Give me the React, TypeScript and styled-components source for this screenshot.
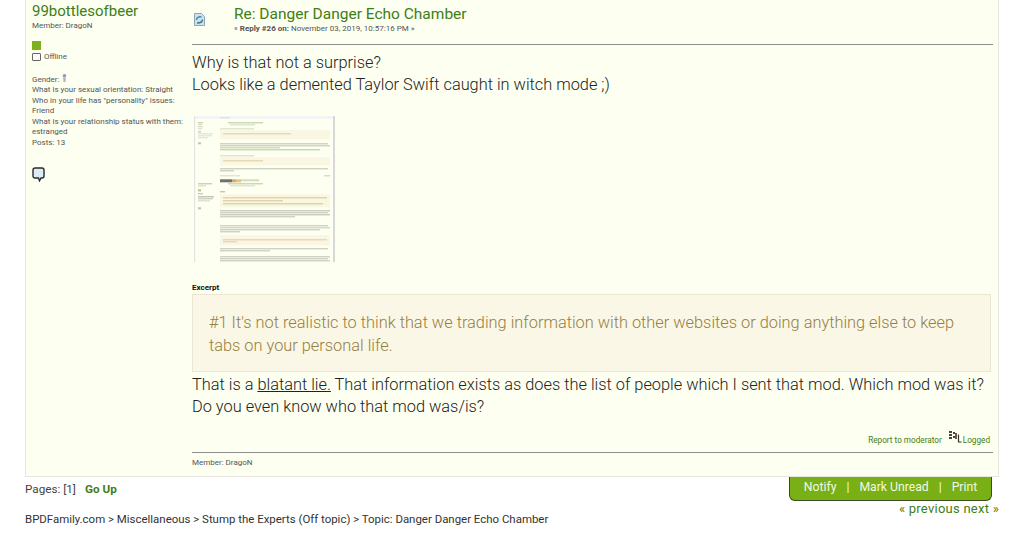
import styled, { createGlobalStyle } from "styled-components";

const GlobalStyle = createGlobalStyle`
  html, body {
    margin: 0;
    padding: 0;
    background: #fff;
    font-family: Roboto, "Liberation Sans", sans-serif;
    overflow: hidden;
  }
`;

const green = "#3f7d17";

// the thumbnail is a shrunken screenshot of the forum: [x, y, w, h, colour]
const thumbParts: [number, number, number, number, string][] = [
  [26, 1, 10, 1, "#cfd2c4"],
  [4, 6, 5, 1, "#8fae6e"],
  [4, 8, 4, 1, "#c3c6b4"],
  [4, 10, 5, 1, "#c3c6b4"],
  [4, 12, 4, 1, "#c3c6b4"],
  [4, 15, 3, 1, "#8fae6e"],
  [4, 17, 15, 1, "#cdd0bf"],
  [4, 19, 14, 1, "#cdd0bf"],
  [4, 21, 10, 1, "#cdd0bf"],
  [4, 26, 3, 2, "#a9ac9c"],
  [34, 6, 35, 1, "#93b774"],
  [36, 8, 25, 1, "#c6cab5"],
  [26, 12, 34, 1, "#c3d2ac"],
  [26, 14, 110, 9, "#f8f3dc"],
  [29, 17, 68, 1, "#d0bb8a"],
  [26, 27, 108, 1, "#a5a99a"],
  [26, 29, 110, 1, "#a5a99a"],
  [26, 31, 60, 1, "#9fc084"],
  [26, 33, 100, 1, "#8fb86f"],
  [26, 39, 34, 1, "#c3d2ac"],
  [26, 41, 110, 8, "#f8f3dc"],
  [29, 44, 40, 1, "#d0bb8a"],
  [26, 52, 108, 1, "#a5a99a"],
  [26, 54, 14, 1, "#a5a99a"],
  [26, 59, 20, 1, "#c6cab5"],
  [130, 59, 6, 1, "#a9c48e"],
  [26, 63, 12, 3, "#3a3a3a"],
  [38, 63, 4, 3, "#c9825b"],
  [42, 63, 5, 3, "#d9b54a"],
  [47, 63, 18, 2, "#c3d2ac"],
  [4, 67, 14, 1, "#8fae6e"],
  [4, 69, 8, 1, "#c3c6b4"],
  [34, 67, 35, 1, "#93b774"],
  [36, 69, 25, 1, "#c6cab5"],
  [4, 73, 3, 2, "#8fae6e"],
  [4, 77, 5, 1, "#8fae6e"],
  [4, 80, 16, 1, "#8d9080"],
  [4, 82, 15, 1, "#a5a99a"],
  [4, 84, 12, 1, "#c3c6b4"],
  [4, 91, 3, 2, "#a9ac9c"],
  [26, 75, 5, 1, "#8d9080"],
  [26, 78, 110, 13, "#f8f3dc"],
  [29, 81, 104, 1, "#c9b06f"],
  [29, 84, 60, 1, "#c9b06f"],
  [29, 87, 100, 1, "#a4bd6c"],
  [26, 94, 110, 1, "#9a9e8e"],
  [26, 96, 108, 1, "#a5a99a"],
  [26, 98, 110, 1, "#9a9e8e"],
  [26, 100, 75, 1, "#a5a99a"],
  [26, 109, 108, 1, "#a5a99a"],
  [26, 111, 110, 1, "#a9b7b5"],
  [26, 113, 100, 1, "#a5a99a"],
  [26, 115, 20, 1, "#a5a99a"],
  [26, 119, 110, 10, "#f8f3dc"],
  [29, 123, 104, 1, "#d0bb8a"],
  [29, 125, 14, 1, "#d0bb8a"],
  [26, 132, 108, 1, "#a5a99a"],
  [26, 134, 50, 1, "#a5a99a"],
  [26, 140, 110, 1, "#a5a99a"],
  [26, 142, 108, 1, "#a5a99a"],
  [26, 144, 110, 1, "#a5a99a"],
];

export default function App() {
  return (
    <Page>
      <GlobalStyle />
      <PostPanel>
        <Poster>
          <PosterName>99bottlesofbeer</PosterName>
          <PosterGroup>Member: DragoN</PosterGroup>
          <GroupStar />
          <OnlineRow>
            <OfflineBox />
            Offline
          </OnlineRow>
          <PosterInfo>
            <div>
              Gender: <GenderIcon viewBox="0 0 5 8">
                <circle cx="2.500" cy="1.800" r="1.800" fill="#9a9aa6" />
                <path d="M1 3.500h3L3.500 8h-2z" fill="#b5b5c2" />
              </GenderIcon>
            </div>
            <div>What is your sexual orientation: Straight</div>
            <div>Who in your life has "personality" issues: Friend</div>
            <div>What is your relationship status with them: estranged</div>
            <div>Posts: 13</div>
          </PosterInfo>
          <BubbleIcon viewBox="0 0 13 15">
            <path
              d="M3 1h7a2 2 0 0 1 2 2v6a2 2 0 0 1-2 2H9l-1.500 2.800L6.500 11H3a2 2 0 0 1-2-2V3a2 2 0 0 1 2-2z"
              fill="#dcecf6"
              stroke="#2a2a2a"
              strokeWidth="1.400"
            />
          </BubbleIcon>
        </Poster>
        <PostBody>
          <PostHeader>
            <XIcon viewBox="0 0 11 13">
              <path d="M0.500 0.500h7l3 3v9h-10z" fill="#cfe0ea" stroke="#8ea6b8" />
              <path d="M2.500 7c0-2.500 2-3.500 5-3" fill="none" stroke="#3f8fb0" strokeWidth="1.500" />
              <path d="M8.500 6.500c0 2.500-2 3.500-5.500 3.500" fill="none" stroke="#2f7f8c" strokeWidth="1.500" />
            </XIcon>
            <div>
              <PostTitle>Re: Danger Danger Echo Chamber</PostTitle>
              <ReplyInfo>
                « <b>Reply #26 on:</b> November 03, 2019, 10:57:16 PM »
              </ReplyInfo>
            </div>
          </PostHeader>
          <BodyText>
            Why is that not a surprise?
            <br />
            Looks like a demented Taylor Swift caught in witch mode ;)
          </BodyText>
          <Thumbnail viewBox="0 0 141 146">
            <rect width="141" height="146" fill="#ffffff" />
            <rect x="0" width="1.500" height="146" fill="#e4e4e4" />
            <rect x="139" width="2" height="146" fill="#d8d8d8" />
            <rect x="1.500" y="0" width="137.500" height="3" fill="#f4f4f4" />
            <rect x="1.500" y="3" width="137.500" height="143" fill="#fdfff0" />
            <g opacity="0.72">
              {thumbParts.map(([x, y, w, h, fill], i) => (
                <rect key={i} x={x} y={y + 0.3} width={w} height={h} fill={fill} />
              ))}
            </g>
          </Thumbnail>
          <QuoteHeader>Excerpt</QuoteHeader>
          <Quote>
            #1 It's not realistic to think that we trading information with other websites or doing anything else to keep
            tabs on your personal life.
          </Quote>
          <BodyText>
            That is a <u>blatant lie.</u> That information exists as does the list of people which I sent that mod. Which
            mod was it? Do you even know who that mod was/is?
          </BodyText>
          <ModeratorBar>
            <span>Report to moderator</span>
            <IpIcon viewBox="0 0 14 12">
              <path d="M1 0h3v2H1zM5 1h2v2H5zM1 3h3v2H1zM1 6h3v2H1zM5 5h2v2H5z" fill="#444" />
              <path d="M7 2h2v6H7z" fill="#8a4a4a" />
              <path d="M10.500 3.500v7.500h3" fill="none" stroke="#2b3a2b" strokeWidth="1.200" />
            </IpIcon>
            <span>Logged</span>
          </ModeratorBar>
          <Signature>Member: DragoN</Signature>
        </PostBody>
      </PostPanel>
      <BelowPanel>
        <PagesLine>
          Pages: [1]<GoUp>Go Up</GoUp>
        </PagesLine>
        <BelowRight>
          <ButtonStrip>
            <span>Notify</span>
            <Separator>|</Separator>
            <span>Mark Unread</span>
            <Separator>|</Separator>
            <span>Print</span>
          </ButtonStrip>
          <PrevNext>« previous next »</PrevNext>
        </BelowRight>
      </BelowPanel>
      <Breadcrumb>
        BPDFamily.com &gt; Miscellaneous &gt; Stump the Experts (Off topic) &gt; Topic: Danger Danger Echo Chamber
      </Breadcrumb>
    </Page>
  );
}

const Page = styled.div`
  width: 1024px;
  height: 556px;
  overflow: hidden;
  box-sizing: border-box;
  padding: 0 25px;
  color: #333;
`;

const PostPanel = styled.div`
  display: flex;
  height: 477px;
  box-sizing: border-box;
  background: #fdfff0;
  border: 1px solid #e6e6de;
  border-top: none;
`;

const Poster = styled.div`
  width: 156px;
  flex: none;
  margin-left: 6px;
  font-size: 8px;
  line-height: 10.500px;
  font-weight: 400;
  color: #555;
`;

const PosterName = styled.div`
  font-size: 15px;
  line-height: 18px;
  margin-top: 2px;
  color: ${green};
`;

const PosterGroup = styled.div`
  margin-top: 1px;
`;

const GroupStar = styled.div`
  width: 9px;
  height: 9px;
  margin-top: 9px;
  background: #7db01c;
`;

const OnlineRow = styled.div`
  display: flex;
  align-items: center;
  gap: 3px;
  height: 11px;
  margin-top: 2px;
`;

const OfflineBox = styled.span`
  width: 7px;
  height: 6px;
  border: 1px solid #666;
  border-radius: 1px;
  background: #fafafa;
`;

const PosterInfo = styled.div`
  margin-top: 11px;
`;

const GenderIcon = styled.svg`
  width: 5px;
  height: 8px;
`;

const BubbleIcon = styled.svg`
  display: block;
  width: 13px;
  height: 15px;
  margin-top: 19px;
`;

const PostBody = styled.div`
  width: 801px;
  flex: none;
  margin-left: 4px;
  display: flex;
  flex-direction: column;
`;

const PostHeader = styled.div`
  display: flex;
  height: 45px;
  box-sizing: border-box;
  margin-bottom: 7px;
  padding: 5px 0 0 2px;
  gap: 29px;
  border-bottom: 1px solid #8f8f8f;
`;

const XIcon = styled.svg`
  width: 11px;
  height: 13px;
  margin-top: 8px;
`;

const PostTitle = styled.div`
  font-size: 15.500px;
  line-height: 18px;
  color: ${green};
`;

const ReplyInfo = styled.div`
  font-size: 8px;
  line-height: 12px;
  color: #555;
`;

const BodyText = styled.div`
  font-size: 16.350px;
  font-weight: 300;
  line-height: 22.400px;
  color: #222;
`;

const Thumbnail = styled.svg`
  display: block;
  width: 141px;
  height: 146px;
  margin: 19px 0 0 2px;
`;

const QuoteHeader = styled.div`
  font-size: 8px;
  font-weight: 700;
  line-height: 10px;
  color: #111;
  margin-top: 21px;
`;

const Quote = styled.div`
  width: 799px;
  box-sizing: border-box;
  height: 78px;
  margin: 1px 0 2px;
  padding: 17px 16px 0;
  background: #fbf7e6;
  border: 1px solid #ebe6cf;
  color: #957f42;
  font-size: 16.350px;
  font-weight: 300;
  line-height: 22.800px;
`;

const ModeratorBar = styled.div`
  display: flex;
  justify-content: flex-end;
  align-items: flex-end;
  height: 11px;
  margin: 16px 3px 0 0;
  font-size: 8.200px;
  line-height: 11px;
  color: ${green};
`;

const IpIcon = styled.svg`
  width: 14px;
  height: 12px;
  margin: 0 1px 3px 6px;
`;

const Signature = styled.div`
  margin-top: 6px;
  padding-top: 4px;
  border-top: 1px solid #8f8f8f;
  font-size: 8px;
  line-height: 11px;
  color: #555;
`;

const BelowPanel = styled.div`
  display: flex;
  justify-content: space-between;
  align-items: flex-start;
  height: 35px;
`;

const PagesLine = styled.div`
  font-size: 11.700px;
  line-height: 14px;
  margin-top: 5px;
  color: #444;
`;

const GoUp = styled.span`
  margin-left: 9px;
  font-weight: 700;
  color: ${green};
`;

const BelowRight = styled.div`
  display: flex;
  flex-direction: column;
  align-items: flex-end;
`;

const ButtonStrip = styled.div`
  display: flex;
  justify-content: center;
  gap: 10px;
  width: 203px;
  height: 24px;
  margin-right: 7px;
  box-sizing: border-box;
  padding-top: 2px;
  background: #78b015;
  border: 1px solid #3c4a20;
  border-top: none;
  border-radius: 0 0 6px 6px;
  color: #f3f8e6;
  font-size: 12.200px;
  line-height: 16px;
`;

const Separator = styled.span`
  color: #f3f8e6;
`;

const PrevNext = styled.div`
  font-size: 13px;
  line-height: 14px;
  margin-top: 1px;
  letter-spacing: 0.250px;
  color: ${green};
`;

const Breadcrumb = styled.div`
  font-size: 11.450px;
  line-height: 14px;
  color: #333;
`;
